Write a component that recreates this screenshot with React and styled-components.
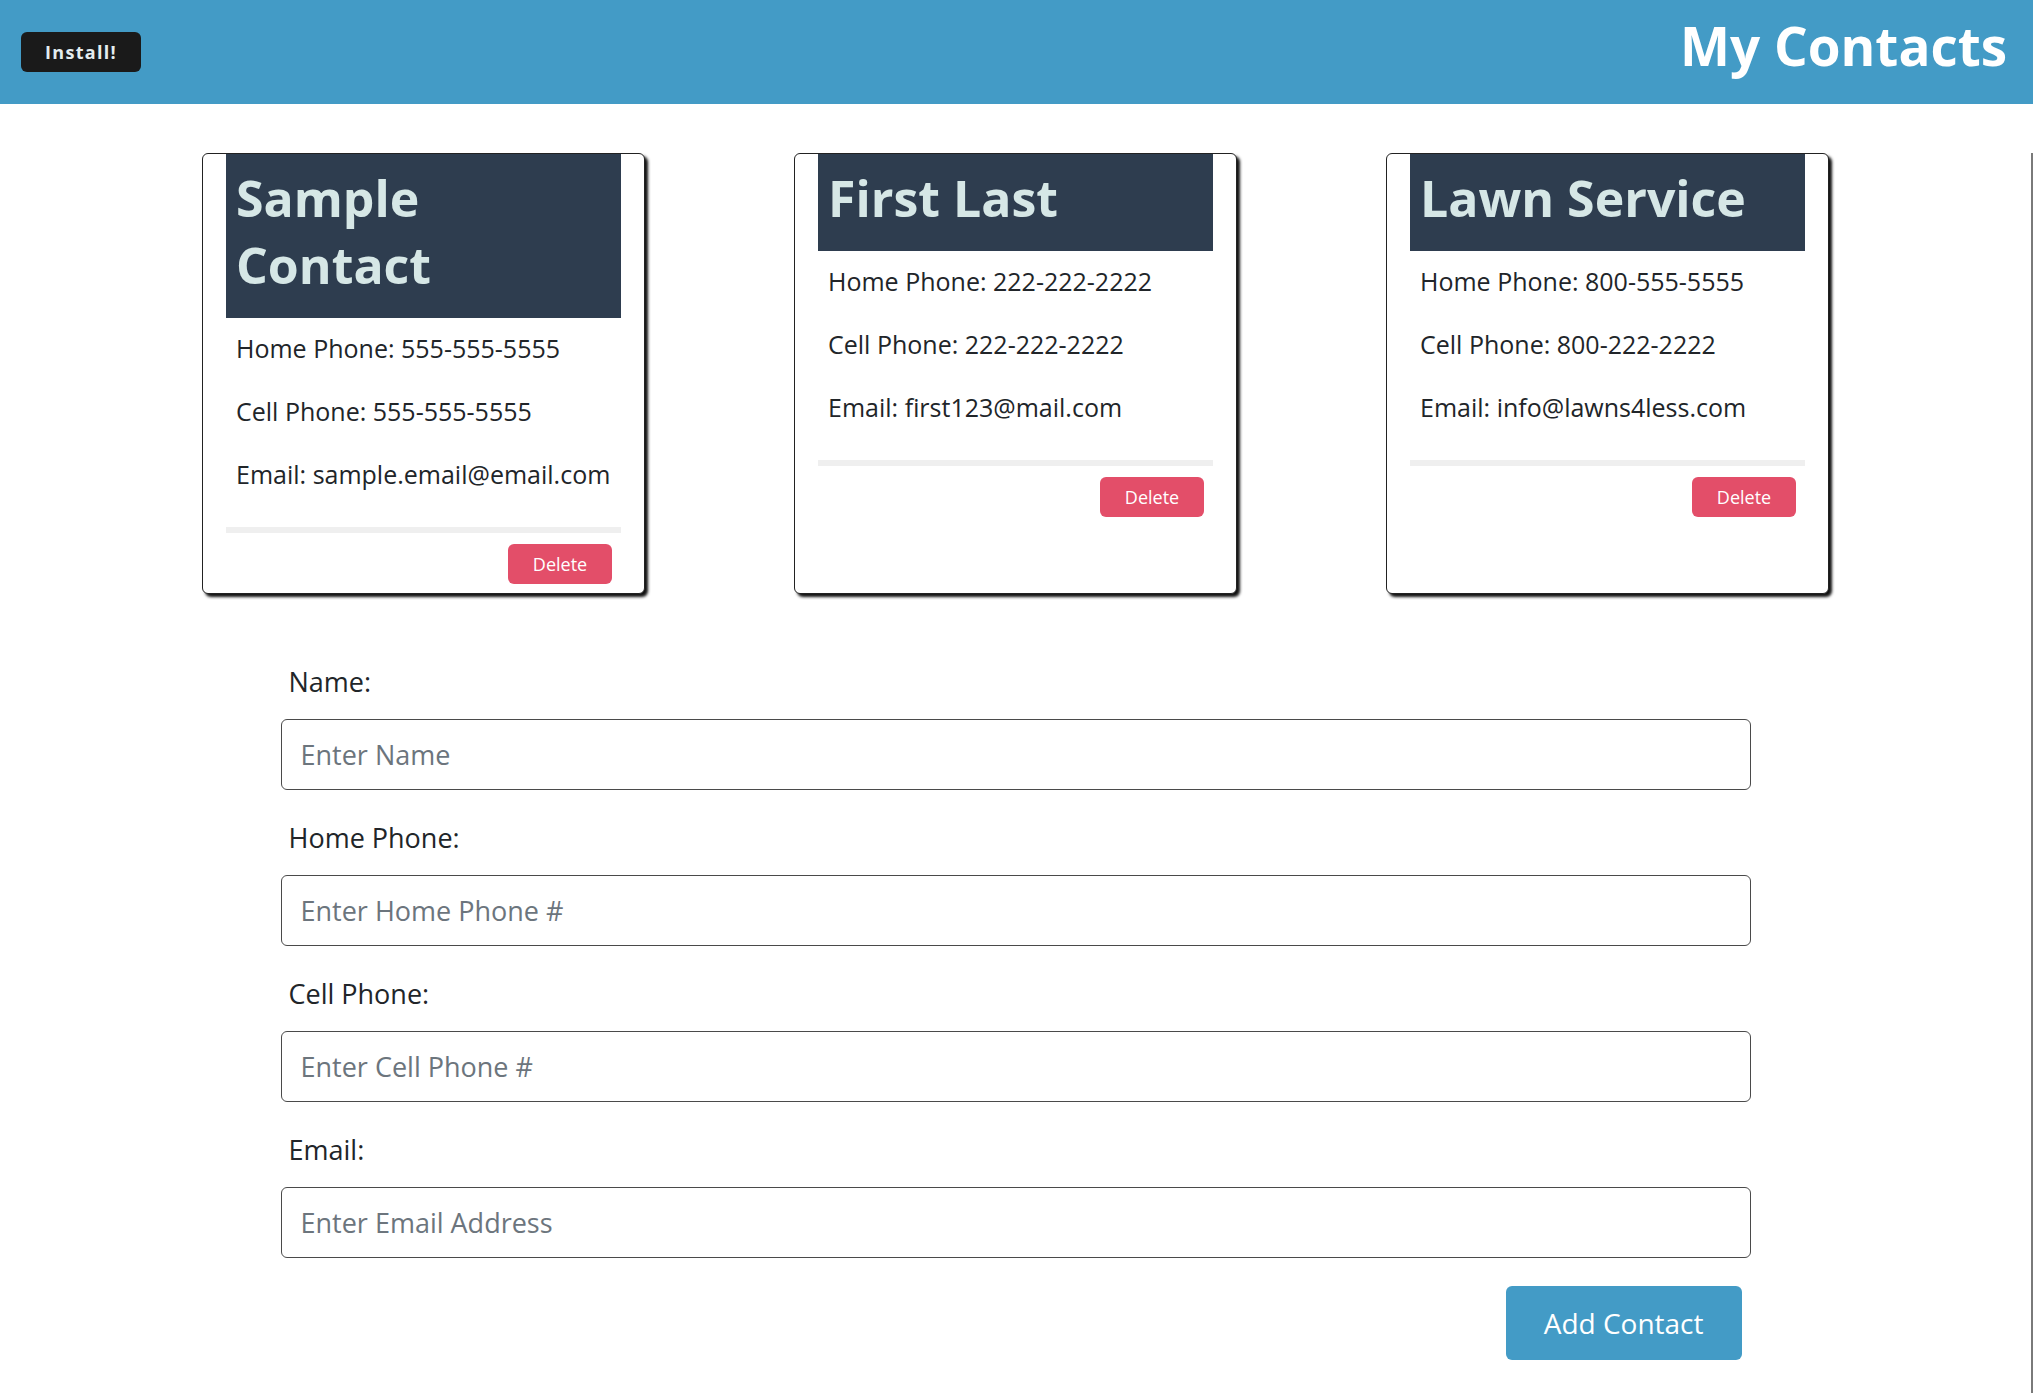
import React from "react";
import styled, { createGlobalStyle } from "styled-components";

const GlobalStyle = createGlobalStyle`
  * {
    box-sizing: border-box;
  }
  body {
    margin: 0;
    background: #fff;
    color: #212529;
    font-family: "Open Sans", "Noto Sans", "Liberation Sans", sans-serif;
  }
`;

const contacts = [
  {
    name: "Sample Contact",
    home: "555-555-5555",
    cell: "555-555-5555",
    email: "sample.email@email.com",
  },
  {
    name: "First Last",
    home: "222-222-2222",
    cell: "222-222-2222",
    email: "first123@mail.com",
  },
  {
    name: "Lawn Service",
    home: "800-555-5555",
    cell: "800-222-2222",
    email: "info@lawns4less.com",
  },
];

const fields = [
  { label: "Name:", placeholder: "Enter Name" },
  { label: "Home Phone:", placeholder: "Enter Home Phone #" },
  { label: "Cell Phone:", placeholder: "Enter Cell Phone #" },
  { label: "Email:", placeholder: "Enter Email Address" },
];

export default function App() {
  return (
    <>
      <GlobalStyle />
      <TopBar>
        <InstallButton>Install!</InstallButton>
        <PageTitle>My Contacts</PageTitle>
      </TopBar>
      <Main>
        <CardGrid>
          {contacts.map((c) => (
            <Card key={c.name}>
              <CardTitle>{c.name}</CardTitle>
              <CardFields>
                <Field>Home Phone: {c.home}</Field>
                <Field>Cell Phone: {c.cell}</Field>
                <Field>Email: {c.email}</Field>
              </CardFields>
              <Divider />
              <CardActions>
                <DeleteButton>Delete</DeleteButton>
              </CardActions>
            </Card>
          ))}
        </CardGrid>

        <Form onSubmit={(e) => e.preventDefault()}>
          {fields.map((f) => (
            <Group key={f.label}>
              <Label>{f.label}</Label>
              <Input placeholder={f.placeholder} />
            </Group>
          ))}
          <ButtonRow>
            <AddButton type="submit">Add Contact</AddButton>
          </ButtonRow>
        </Form>
      </Main>
    </>
  );
}

const TopBar = styled.header`
  display: flex;
  align-items: center;
  justify-content: space-between;
  height: 104px;
  padding: 0 26px 0 21px;
  background: #439bc6;
`;

const InstallButton = styled.button`
  height: 40px;
  padding: 0 24px;
  border: none;
  border-radius: 6px;
  background: #1a1a1a;
  color: #e4edef;
  font-family: "Open Sans", sans-serif;
  font-weight: 700;
  font-size: 18px;
  letter-spacing: 1.3px;
`;

const PageTitle = styled.h1`
  margin: 0 0 14px;
  color: #fff;
  font-size: 53px;
  font-weight: 700;
`;

const Main = styled.main`
  min-height: calc(100vh - 104px);
  border-right: 2px solid #7a7a7a;
  padding-bottom: 20px;
`;

const CardGrid = styled.section`
  display: grid;
  grid-template-columns: repeat(3, 1fr);
  justify-items: center;
  align-items: stretch;
  max-width: 1776px;
  margin: 49px auto 0;
`;

const Card = styled.div`
  display: flex;
  flex-direction: column;
  width: 443px;
  padding: 0 23px 9px;
  border: 1px solid #222;
  border-radius: 6px;
  box-shadow: 3px 3px 3px #111;
  background: #fff;
`;

const CardTitle = styled.h2`
  margin: 0;
  padding: 11px 10px 19px;
  background: #2e3d4f;
  color: #d6e7e6;
  font-size: 50px;
  font-weight: 700;
  line-height: 67px;
`;

const CardFields = styled.div`
  display: flex;
  flex-direction: column;
  gap: 26px;
  padding: 12px 10px 0;
`;

const Field = styled.p`
  margin: 0;
  font-size: 25px;
  line-height: 37px;
  color: #212529;
`;

const Divider = styled.hr`
  margin: 34px 0 0;
  height: 6px;
  border: none;
  background: #efefef;
`;

const CardActions = styled.div`
  display: flex;
  justify-content: flex-end;
  margin-top: 11px;
  padding-right: 9px;
`;

const DeleteButton = styled.button`
  height: 40px;
  width: 104px;
  border: none;
  border-radius: 6px;
  background: #e34e69;
  color: #fff;
  font-family: "Open Sans", sans-serif;
  font-size: 18px;
`;

const Form = styled.form`
  display: flex;
  flex-direction: column;
  gap: 28px;
  max-width: 1470px;
  margin: 68px auto 0;
`;

const Group = styled.div`
  display: flex;
  flex-direction: column;
`;

const Label = styled.label`
  padding-left: 8px;
  margin-bottom: 17px;
  font-size: 27px;
  line-height: 40px;
  color: #212529;
`;

const Input = styled.input`
  height: 71px;
  padding: 0 19px;
  border: 1.5px solid #4a4a4a;
  border-radius: 6px;
  font-family: "Open Sans", sans-serif;
  font-size: 27px;
  color: #212529;

  &::placeholder {
    color: #6c757d;
  }
`;

const ButtonRow = styled.div`
  display: flex;
  justify-content: flex-end;
  padding-right: 9px;
`;

const AddButton = styled.button`
  height: 74px;
  padding: 0 38px;
  border: none;
  border-radius: 6px;
  background: #439bc6;
  color: #fff;
  font-family: "Open Sans", sans-serif;
  font-size: 28px;
`;
